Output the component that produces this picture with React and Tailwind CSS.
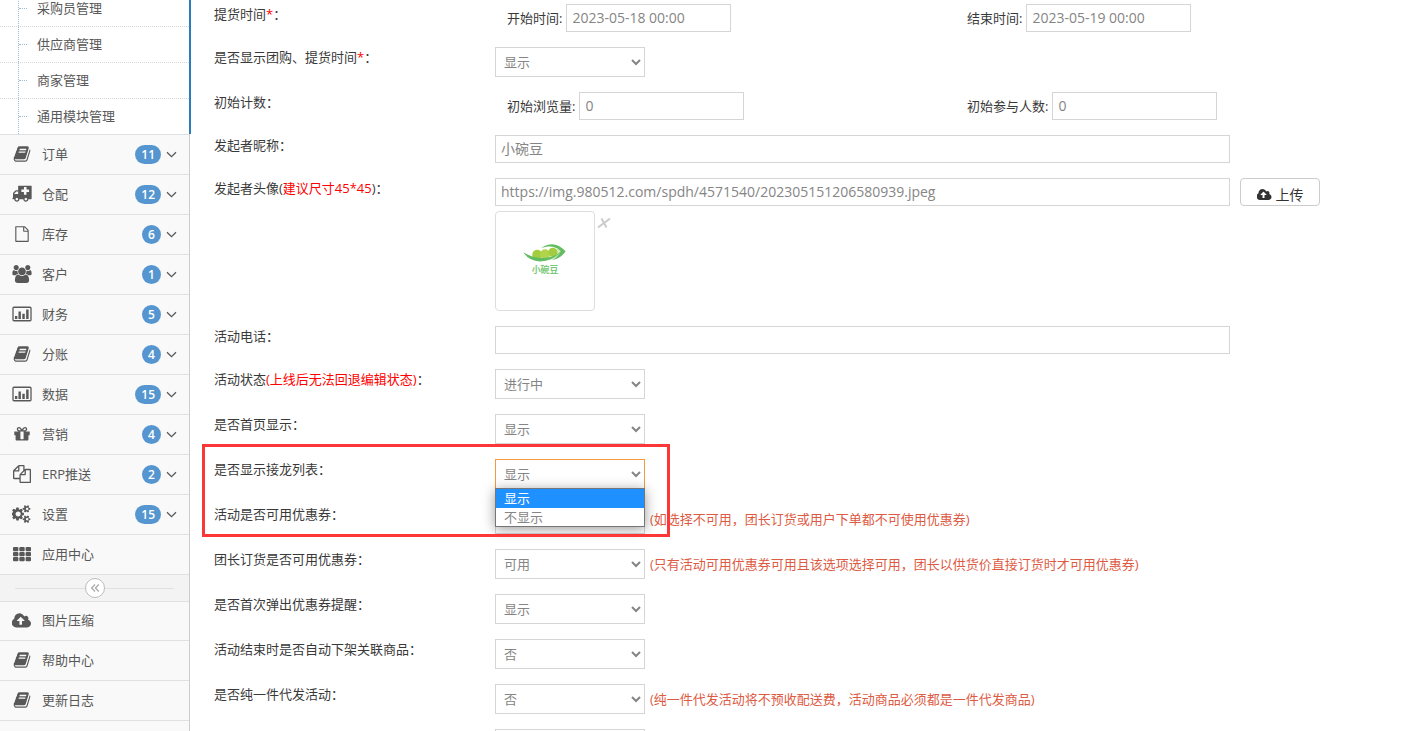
import React from "react";

const PATHS = {
  book: [
    "0 0 1792 1792",
    "M1703 478q40 57 18 129l-275 906q-19 64-76.5 107.5t-122.5 43.5h-923q-77 0-148.5-53.5t-99.5-131.5q-24-67-2-127 0-4 3-27t4-37q1-8-3-21.5t-3-19.5q2-11 8-21t16.5-23.5 16.5-23.5q23-38 45-91.5t30-91.5q3-10 .5-30t-.5-28q3-11 17-28t17-23q21-36 42-92t25-90q1-9-2.5-32t.5-28q4-13 22-30.5t22-22.5q19-26 42.5-84.5t27.5-96.5q1-8-3-25.5t-2-26.5q2-8 9-18t18-23 17-21q8-12 16.5-30.5t15-35 16-36 19.5-32 26.5-23.5 36-11.5 47.5 5.5l-1 3q38-9 51-9h761q74 0 114 56t18 130l-274 906q-36 119-71.5 153.5t-128.5 34.5h-869q-27 0-38 15-11 16-1 43 24 70 144 70h923q29 0 56-15.5t35-41.5l300-987q7-22 5-57 38 15 59 43zm-1064 2q-4 13 2 22.5t20 9.5h608q13 0 25.5-9.5t16.5-22.5l21-64q4-13-2-22.5t-20-9.5h-608q-13 0-25.5 9.5t-16.5 22.5zm-83 256q-4 13 2 22.5t20 9.5h608q13 0 25.5-9.5t16.5-22.5l21-64q4-13-2-22.5t-20-9.5h-608q-13 0-25.5 9.5t-16.5 22.5z",
  ],
  ambulance: [
    "0 0 1920 1792",
    "M576 1408q0-52-38-90t-90-38-90 38-38 90 38 90 90 38 90-38 38-90zm-384-512h384v-256h-158q-14 2-22 9l-195 195q-7 12-9 22v30zm1280 512q0-52-38-90t-90-38-90 38-38 90 38 90 90 38 90-38 38-90zm192-736v-192q0-14-9-23t-23-9h-224v-224q0-14-9-23t-23-9h-192q-14 0-23 9t-9 23v224h-224q-14 0-23 9t-9 23v192q0 14 9 23t23 9h224v224q0 14 9 23t23 9h192q14 0 23-9t9-23v-224h224q14 0 23-9t9-23zM1920 128v1216q0 26-19 45t-45 19h-256q0 106-75 181t-181 75-181-75-75-181h-384q0 106-75 181t-181 75-181-75-75-181h-128q-26 0-45-19t-19-45 19-45 45-19v-416q0-26 13-58t32-51l198-198q19-19 51-32t58-13h160v-384q0-26 19-45t45-19h1216q26 0 45 19t19 45z",
  ],
  file: [
    "-128 -128 2048 2048",
    "M1596 380q28 28 48 76t20 88v1152q0 40-28 68t-68 28h-1344q-40 0-68-28t-28-68v-1600q0-40 28-68t68-28h896q40 0 88 20t76 48zm-444-244v376h376q-10-29-22-41l-313-313q-12-12-41-22zm384 1528v-1024h-416q-40 0-68-28t-28-68v-416h-768v1536h1280z",
  ],
  users: [
    "0 0 1920 1792",
    "M593 896q-162 5-265 128h-134q-82 0-138-40.5t-56-118.5q0-353 124-353 6 0 43.5 21t97.5 42.5 119 21.5q67 0 133-23-5 37-5 66 0 139 81 256zm1071 637q0 120-73 189.5t-194 69.5h-874q-121 0-194-69.5t-73-189.5q0-53 3.5-103.5t14-109 26.5-108.5 43-97.5 62-81 85.5-53.5 111.5-20q10 0 43 21.5t73 48 107 48 135 21.5 135-21.5 107-48 73-48 43-21.5q61 0 111.5 20t85.5 53.5 62 81 43 97.5 26.5 108.5 14 109 3.5 103.5zm-1024-1277q0 106-75 181t-181 75-181-75-75-181 75-181 181-75 181 75 75 181zm704 384q0 159-112.5 271.5t-271.5 112.5-271.5-112.5-112.5-271.5 112.5-271.5 271.5-112.5 271.5 112.5 112.5 271.5zm576 225q0 78-56 118.5t-138 40.5h-134q-103-123-265-128 81-117 81-256 0-29-5-66 66 23 133 23 59 0 119-21.5t97.5-42.5 43.5-21q124 0 124 353zm-128-609q0 106-75 181t-181 75-181-75-75-181 75-181 181-75 181 75 75 181z",
  ],
  chart: [
    "0 0 1920 1792",
    "M160 160h1600q66 0 113 47t47 113v1152q0 66-47 113t-113 47h-1600q-66 0-113-47t-47-113v-1152q0-66 47-113t113-47zm0 128q-32 0-32 32v1152q0 32 32 32h1600q32 0 32-32v-1152q0-32-32-32zM256 1088h240v304h-240zM608 640h240v752h-240zM992 864h240v528h-240zM1376 448h240v944h-240z",
    "evenodd",
  ],
  gift: [
    "0 0 1792 1792",
    "M1056 1356v-716h-320v716q0 25 18 38.5t46 13.5h192q28 0 46-13.5t18-38.5zm-456-844h195l-126-161q-26-31-69-31-40 0-68 28t-28 68 28 68 68 28zm688-96q0-40-28-68t-68-28q-43 0-69 31l-125 161h194q40 0 68-28t28-68zm376 256v320q0 14-9 23t-23 9h-96v416q0 40-28 68t-68 28h-1088q-40 0-68-28t-28-68v-416h-96q-14 0-23-9t-9-23v-320q0-14 9-23t23-9h440q-93 0-158.5-65.5t-65.5-158.5 65.5-158.5 158.5-65.5q107 0 168 77l128 165 128-165q61-77 168-77 93 0 158.5 65.5t65.5 158.5-65.5 158.5-158.5 65.5h440q14 0 23 9t9 23z",
  ],
  copy: [
    "0 0 1792 1792",
    "M1696 384q40 0 68 28t28 68v1216q0 40-28 68t-68 28h-960q-40 0-68-28t-28-68v-288h-544q-40 0-68-28t-28-68v-672q0-40 20-88t48-76l408-408q28-28 76-48t88-20h416q40 0 68 28t28 68v328q68-40 128-40h416zm-544 213l-299 299h299v-299zm-640-384l-299 299h299v-299zm196 647l316-316v-416h-384v416q0 40-28 68t-68 28h-416v640h512v-256q0-40 20-88t48-76zm956 804v-1152h-384v416q0 40-28 68t-68 28h-416v640h896z",
  ],
  cogs: [
    "0 0 1920 1792",
    "M832 896q0-106-75-181t-181-75-181 75-75 181 75 181 181 75 181-75 75-181zm768 512q0-52-38-90t-90-38-90 38-38 90q0 53 37.5 90.5t90.5 37.5 90.5-37.5 37.5-90.5zm0-1024q0-52-38-90t-90-38-90 38-38 90q0 53 37.5 90.5t90.5 37.5 90.5-37.5 37.5-90.5zm-448 421v185q0 10-7 19.5t-16 10.5l-155 24q-11 35-32 76 34 48 90 115 7 11 7 20 0 12-7 19-23 30-82.5 89.5t-78.5 59.5q-11 0-21-7l-115-90q-37 19-77 31-11 108-23 155-7 24-30 24h-186q-11 0-20-7.5t-10-17.5l-23-153q-34-10-75-31l-118 89q-7 7-20 7-11 0-21-8-144-133-144-160 0-9 7-19 10-14 41-53t47-61q-23-44-35-82l-152-24q-10-1-17-9.5t-7-19.5v-185q0-10 7-19.5t16-10.5l155-24q11-35 32-76-34-48-90-115-7-11-7-20 0-12 7-20 22-30 82-89t79-59q11 0 21 7l115 90q34-18 77-32 11-108 23-154 7-24 30-24h186q11 0 20 7.5t10 17.5l23 153q34 10 75 31l118-89q8-7 20-7 11 0 21 8 144 133 144 160 0 8-7 19-12 16-42 54t-45 60q23 48 34 82l152 23q10 2 17 10.5t7 19.5zm640 533v140q0 16-149 31-12 27-30 52 51 113 51 138 0 4-4 7-122 71-124 71-8 0-46-47t-52-68q-20 2-30 2t-30-2q-14 21-52 68t-46 47q-2 0-124-71-4-3-4-7 0-25 51-138-18-25-30-52-149-15-149-31v-140q0-16 149-31 13-29 30-52-51-113-51-138 0-4 4-7 4-2 35-20t59-34 30-16q8 0 46 46.5t52 67.5q20-2 30-2t30 2q51-71 92-112l6-2q4 0 124 70 4 3 4 7 0 25-51 138 17 23 30 52 149 15 149 31zm0-1024v140q0 16-149 31-12 27-30 52 51 113 51 138 0 4-4 7-122 71-124 71-8 0-46-47t-52-68q-20 2-30 2t-30-2q-14 21-52 68t-46 47q-2 0-124-71-4-3-4-7 0-25 51-138-18-25-30-52-149-15-149-31v-140q0-16 149-31 13-29 30-52-51-113-51-138 0-4 4-7 4-2 35-20t59-34 30-16q8 0 46 46.5t52 67.5q20-2 30-2t30 2q51-71 92-112l6-2q4 0 124 70 4 3 4 7 0 25-51 138 17 23 30 52 149 15 149 31z",
  ],
  upload: [
    "0 0 1920 1792",
    "M1216 864q0-14-9-23l-352-352q-9-9-23-9t-23 9l-351 351q-10 12-10 24 0 14 9 23t23 9h224v352q0 13 9.5 22.5t22.5 9.5h192q13 0 22.5-9.5t9.5-22.5v-352h224q13 0 22.5-9.5t9.5-22.5zm640 288q0 159-112.5 271.5t-271.5 112.5h-1088q-185 0-316.5-131.5t-131.5-316.5q0-130 70-240t188-165q-2-30-2-43 0-212 150-362t362-150q156 0 285.5 87t188.5 231q71-62 166-62 106 0 181 75t75 181q0 76-41 138 130 31 213.5 135.5t83.5 238.5z",
  ],
};

function Icon({ name, className }) {
  if (name === "grid") {
    return (
      <svg viewBox="0 0 20 18" className={className} fill="currentColor" aria-hidden="true">
        {[1, 7.3, 13.6].map((x) =>
          [2, 7, 12].map((y) => (
            <rect key={`${x}-${y}`} x={x} y={y} width="5.4" height="4.2" rx="1" />
          ))
        )}
      </svg>
    );
  }
  const [viewBox, d, rule] = PATHS[name];
  return (
    <svg viewBox={viewBox} className={className} fill="currentColor" fillRule={rule || "nonzero"} aria-hidden="true">
      <path d={d} />
    </svg>
  );
}

const SUBMENU = ["采购员管理", "供应商管理", "商家管理", "通用模块管理"];

const MENU = [
  ["book", "订单", 11],
  ["ambulance", "仓配", 12],
  ["file", "库存", 6],
  ["users", "客户", 1],
  ["chart", "财务", 5],
  ["book", "分账", 4],
  ["chart", "数据", 15],
  ["gift", "营销", 4],
  ["copy", "ERP推送", 2],
  ["cogs", "设置", 15],
  ["grid", "应用中心", null],
];

function MenuLink({ icon, text, count }) {
  return (
    <a href="#" className="flex h-full items-center px-3">
      <span className="flex w-5 justify-center pb-px">
        <Icon name={icon} className="h-[18px] w-5" />
      </span>
      <span className="ml-[10px] flex-1 pb-[2px]">{text}</span>
      {count && (
        <span className="mr-[5px] min-w-[19px] rounded-full bg-[#5596d0] px-[6px] text-center text-[12px] leading-[19px] font-semibold text-white">
          {count}
        </span>
      )}
      {count && (
        <svg viewBox="0 0 11 12" className="h-3 w-[11px]" fill="none" stroke="currentColor" strokeWidth="1.3" aria-hidden="true">
          <path d="M1 3.200 5.500 7.600 10 3.200" />
        </svg>
      )}
    </a>
  );
}

function Sidebar() {
  return (
    <nav className="w-[190px] shrink-0 border-r border-[#ccc] bg-[#f2f2f2] text-[#585858]">
      <ul className="relative -mt-[10px] bg-white">
        {SUBMENU.map((text) => (
          <li key={text} className="h-9 border-t border-dotted border-[#d8d8d8]">
            <a href="#" className="flex h-full items-center">
              <span className="ml-[19px] w-2 border-t border-dotted border-[#9dbdd6]" />
              <span className="ml-[10px] pb-[2px]">{text}</span>
            </a>
          </li>
        ))}
        <li aria-hidden="true" className="absolute inset-y-0 left-[18px] border-l border-dotted border-[#9dbdd6]" />
        <li aria-hidden="true" className="absolute inset-y-0 -right-[2px] w-[2px] bg-[#2b7dbc]" />
      </ul>
      <ul>
        {MENU.map(([icon, text, count]) => (
          <li key={text} className="h-10 border-t border-[#e0e0e0] bg-[#f9f9f9]">
            <MenuLink icon={icon} text={text} count={count} />
          </li>
        ))}
      </ul>
      <div className="flex h-7 items-center border-y border-[#e0e0e0] bg-[#f3f3f3] px-[15px]">
        <span className="h-px flex-1 bg-[#e0e0e0]" />
        <button type="button" aria-label="收起菜单" className="flex size-5 items-center justify-center rounded-full border border-[#bbb] bg-white text-[#aaa]">
          <svg viewBox="0 0 10 10" className="size-[10px]" fill="none" stroke="currentColor" strokeWidth="1.3" aria-hidden="true">
            <path d="M5 1.500 1.600 5 5 8.500M8.800 1.500 5.400 5 8.800 8.500" />
          </svg>
        </button>
        <span className="h-px flex-1 bg-[#e0e0e0]" />
      </div>
      <ul className="divide-y divide-[#e0e0e0] border-b border-[#e0e0e0] bg-[#f9f9f9]">
        <li className="h-[39px]"><MenuLink icon="upload" text="图片压缩" /></li>
        <li className="h-10"><MenuLink icon="book" text="帮助中心" /></li>
        <li className="h-[39px]"><MenuLink icon="book" text="更新日志" /></li>
      </ul>
      <div className="h-10 bg-[#f9f9f9]" />
    </nav>
  );
}

function Row({ label, id, children }) {
  return (
    <div className="mb-[15px] flex items-start">
      <label htmlFor={id} className="w-[281px] shrink-0 leading-5">{label}</label>
      <div className="min-w-0 flex-1">{children}</div>
    </div>
  );
}

const INPUT = "block h-7 min-w-0 border border-[#d5d5d5] bg-white px-[5px] pb-[2px] text-[14px] text-[#858585]";

function PairField({ id, label, value }) {
  return (
    <div className="flex items-center gap-1 pl-3">
      <label htmlFor={id} className="shrink-0">{label}</label>
      <input id={id} defaultValue={value} className={`${INPUT} w-[165px]`} />
    </div>
  );
}

function SelectField({ id, options, hint, open }) {
  return (
    <div className="flex items-center gap-[5px]">
      <div className="relative w-[150px] shrink-0">
        <select
          id={id}
          className={`block h-[30px] w-full border bg-white px-1 text-[#858585] ${open ? "border-[#f59942]" : "border-[#d5d5d5]"}`}
        >
          {options.map((o) => <option key={o}>{o}</option>)}
        </select>
        {open && (
          <ul role="listbox" className="absolute inset-x-0 top-[29px] z-10 border border-[#767676] bg-white leading-[18px] text-[#858585] shadow-[0_2px_12px_rgba(0,0,0,0.4)]">
            <li role="option" aria-selected="true" className="bg-[#1e90ff] px-2 pb-px text-white">{options[0]}</li>
            <li role="option" aria-selected="false" className="px-2">{options[1]}</li>
          </ul>
        )}
      </div>
      {hint && <span className="text-[#dd5a43]">{hint}</span>}
    </div>
  );
}

function SelectRow({ id, label, ...rest }) {
  return (
    <Row label={label} id={id}>
      <SelectField id={id} {...rest} />
    </Row>
  );
}

function PeaLogo() {
  return (
    <svg viewBox="0 0 100 100" className="size-full" role="img" aria-label="小碗豆">
      <path d="M28 41q6 6 14 6c13 0 14-13 25-8q-4 8-12 10-18 4-27-8z" fill="#d6ecb4" />
      <circle cx="42" cy="43.500" r="5" fill="#a3cd3e" />
      <circle cx="50" cy="43" r="5" fill="#b2d44d" />
      <circle cx="58" cy="41" r="4.600" fill="#a3cd3e" />
      <path d="M28 41q9 6 19 6 12 0 19-7-7 10-21 10.500-12-.5-17-9.500z" fill="#62bd62" />
      <path d="M46 37c8-6 17-6 25 3-3 5-8 8-14 9 4-2 7-5 9-9-5-5-12-6-20-3z" fill="#62bd62" />
      <text x="50" y="62" textAnchor="middle" fontSize="9" fontWeight="700" fill="#7cc97a">小碗豆</text>
    </svg>
  );
}

export default function App() {
  return (
    <div className="flex h-screen overflow-hidden bg-white font-['Open_Sans','Noto_Sans_CJK_SC',sans-serif] text-[13px] leading-5 text-[#393939]">
      <Sidebar />
      <main className="min-w-0 flex-1 pt-1 pl-6">
        <Row label={<>提货时间<span className="text-[#f00]">*</span>：</>} id="start">
          <div className="grid grid-cols-2 gap-1">
            <PairField id="start" label="开始时间:" value="2023-05-18 00:00" />
            <PairField id="end" label="结束时间:" value="2023-05-19 00:00" />
          </div>
        </Row>
        <SelectRow id="showTime" label={<>是否显示团购、提货时间<span className="text-[#f00]">*</span>：</>} options={["显示", "不显示"]} />
        <Row label="初始计数：" id="views">
          <div className="grid grid-cols-2 gap-1">
            <PairField id="views" label="初始浏览量:" value="0" />
            <PairField id="joins" label="初始参与人数:" value="0" />
          </div>
        </Row>
        <Row label="发起者昵称：" id="nick">
          <div className="pr-[181px]">
            <input id="nick" defaultValue="小碗豆" className={`${INPUT} w-full`} />
          </div>
        </Row>
        <Row label={<>发起者头像(<span className="text-[#f00]">建议尺寸45*45</span>)：</>} id="avatar">
          <div className="flex gap-[10px] pr-[91px]">
            <input id="avatar" defaultValue="https://img.980512.com/spdh/4571540/202305151206580939.jpeg" className={`${INPUT} flex-1`} />
            <button type="button" className="flex h-7 w-20 items-center justify-center gap-1 rounded border border-[#ccc] bg-white pt-[6px] text-[14px] text-[#333]">
              <Icon name="upload" className="h-[14px] w-[15px]" />
              上传
            </button>
          </div>
          <div className="mt-[5px] flex items-start gap-[2px]">
            <div className="size-[100px] rounded border border-[#ddd]"><PeaLogo /></div>
            <button type="button" aria-label="删除图片" className="mt-[6px] text-[#ccc]">
              <svg viewBox="0 0 14 12" className="h-3 w-[14px]" fill="none" stroke="currentColor" strokeWidth="2" aria-hidden="true">
                <path d="M1 10.500 13 1.500M4.500 1.500l5 9" />
              </svg>
            </button>
          </div>
        </Row>
        <Row label="活动电话：" id="phone">
          <div className="pr-[181px]">
            <input id="phone" className={`${INPUT} w-full`} />
          </div>
        </Row>
        <SelectRow id="status" label={<>活动状态<span className="text-[#f00]">(上线后无法回退编辑状态)</span>：</>} options={["进行中", "编辑中"]} />
        <SelectRow id="home" label="是否首页显示：" options={["显示", "不显示"]} />
        <div className="relative">
          <SelectRow id="chain" label="是否显示接龙列表：" options={["显示", "不显示"]} open />
          <SelectRow id="coupon" label="活动是否可用优惠券：" options={["可用", "不可用"]} hint="(如选择不可用，团长订货或用户下单都不可使用优惠券)" />
          <div aria-hidden="true" className="pointer-events-none absolute -top-[15px] -bottom-[3px] -left-3 z-20 w-[468px] border-3 border-[#fb3737]" />
        </div>
        <SelectRow id="leader" label="团长订货是否可用优惠券：" options={["可用", "不可用"]} hint="(只有活动可用优惠券可用且该选项选择可用，团长以供货价直接订货时才可用优惠券)" />
        <SelectRow id="popup" label="是否首次弹出优惠券提醒：" options={["显示", "不显示"]} />
        <SelectRow id="offshelf" label="活动结束时是否自动下架关联商品：" options={["否", "是"]} />
        <SelectRow id="dropship" label="是否纯一件代发活动：" options={["否", "是"]} hint="(纯一件代发活动将不预收配送费，活动商品必须都是一件代发商品)" />
        <SelectRow id="more" options={["否", "是"]} />
      </main>
    </div>
  );
}
